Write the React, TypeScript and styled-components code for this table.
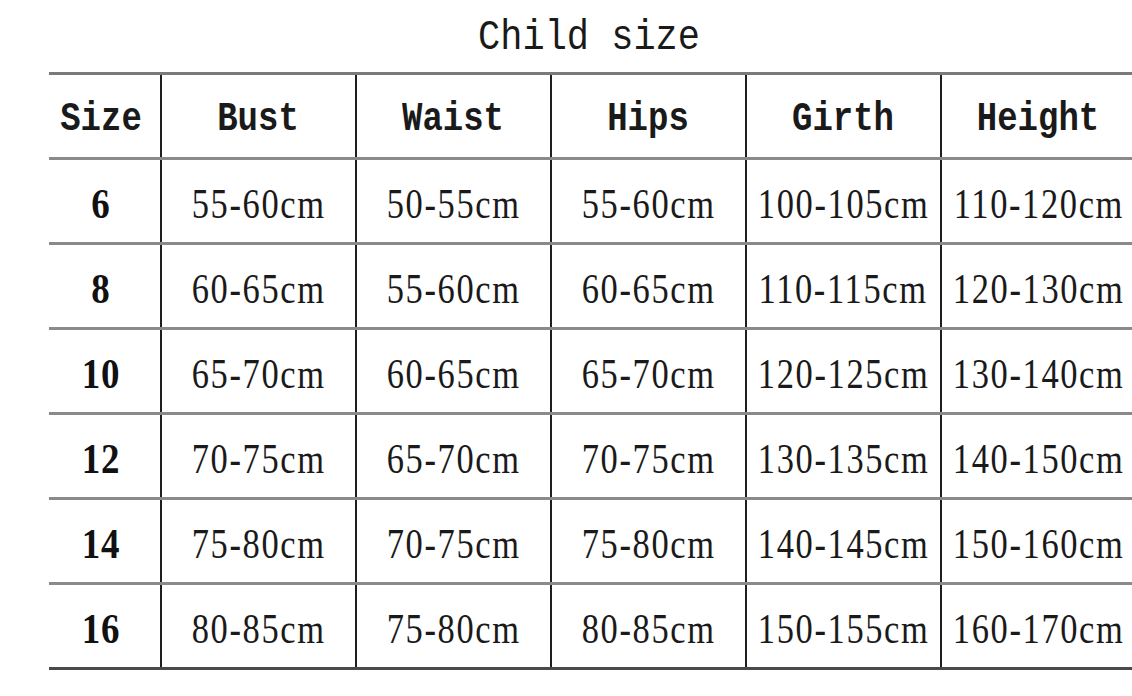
import styled, { createGlobalStyle } from "styled-components";

const GlobalStyle = createGlobalStyle`
    html, body {
        margin: 0;
        padding: 0;
        background: #fff;
    }
    body {
        width: 1132px;
        height: 696px;
        overflow: hidden;
    }
`;

const Page = styled.div`
    padding-left: 49px;
    color: #111;
`;

const Title = styled.h1`
    width: 1087px;
    height: 72px;
    margin: 0;
    display: flex;
    align-items: center;
    justify-content: center;
    font-weight: 400;
`;

const TitleText = styled.span`
    display: inline-block;
    font-family: "Liberation Mono", "DejaVu Sans Mono", monospace;
    font-size: 42px;
    line-height: 1;
    color: #1a1a1a;
    transform: scaleX(0.88);
    margin-top: 4px;
    margin-left: -6px;
`;

const Table = styled.div`
    width: 1087px;
    border-top: 3px solid #7a7a7a;
`;

const Row = styled.div<{ $last?: boolean }>`
    display: grid;
    grid-template-columns: 111px repeat(5, 195px);
    height: 85px;
    box-sizing: border-box;
    border-bottom: 3px solid ${(p) => (p.$last ? "#4a4a4a" : "#8a8a8a")};
`;

const Cell = styled.div<{ $first?: boolean }>`
    display: flex;
    align-items: center;
    justify-content: center;
    padding-right: ${(p) => (p.$first ? "7px" : "0")};
    border-left: ${(p) => (p.$first ? "none" : "2px solid #1e1e1e")};
    white-space: nowrap;
`;

const HeadText = styled.span`
    display: inline-block;
    font-family: "Liberation Mono", "DejaVu Sans Mono", monospace;
    font-weight: 700;
    font-size: 40px;
    line-height: 1;
    color: #1a1a1a;
    transform: scaleX(0.85);
    margin-top: 8px;
`;

const SizeText = styled.span`
    display: inline-block;
    font-family: "Liberation Serif", "Times New Roman", serif;
    font-weight: 700;
    font-size: 42px;
    line-height: 1;
    letter-spacing: 1px;
    transform: scaleX(0.88);
    margin-top: 6px;
`;

const ValueText = styled.span`
    display: inline-block;
    font-family: "Liberation Serif", "Times New Roman", serif;
    font-weight: 400;
    font-size: 42px;
    line-height: 1;
    letter-spacing: 2px;
    color: #1a1a1a;
    transform: scaleX(0.82);
    margin-top: 6px;
`;

const headers = ["Size", "Bust", "Waist", "Hips", "Girth", "Height"];

const rows: string[][] = [
    ["6", "55-60cm", "50-55cm", "55-60cm", "100-105cm", "110-120cm"],
    ["8", "60-65cm", "55-60cm", "60-65cm", "110-115cm", "120-130cm"],
    ["10", "65-70cm", "60-65cm", "65-70cm", "120-125cm", "130-140cm"],
    ["12", "70-75cm", "65-70cm", "70-75cm", "130-135cm", "140-150cm"],
    ["14", "75-80cm", "70-75cm", "75-80cm", "140-145cm", "150-160cm"],
    ["16", "80-85cm", "75-80cm", "80-85cm", "150-155cm", "160-170cm"],
];

export default function App(): JSX.Element {
    return (
        <>
            <GlobalStyle />
            <Page>
                <Title>
                    <TitleText>Child size</TitleText>
                </Title>
                <Table>
                    <Row>
                        {headers.map((h, i) => (
                            <Cell key={h} $first={i === 0}>
                                <HeadText>{h}</HeadText>
                            </Cell>
                        ))}
                    </Row>
                    {rows.map((r, ri) => (
                        <Row key={r[0]} $last={ri === rows.length - 1}>
                            {r.map((v, i) => (
                                <Cell key={i} $first={i === 0}>
                                    {i === 0 ? <SizeText>{v}</SizeText> : <ValueText>{v}</ValueText>}
                                </Cell>
                            ))}
                        </Row>
                    ))}
                </Table>
            </Page>
        </>
    );
}
